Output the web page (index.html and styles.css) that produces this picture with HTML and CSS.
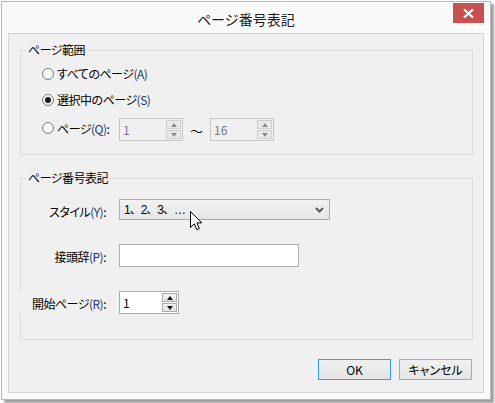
FILE: index.html
```html
<!DOCTYPE html>
<html lang="ja">
<head>
<meta charset="utf-8">
<title>ページ番号表記</title>
<link rel="stylesheet" href="styles.css">
</head>
<body>
<div class="window">
  <div class="titlebar">
    <div class="title">ページ番号表記</div>
    <div class="close">
      <svg width="11" height="9" viewBox="0 0 11 9"><path d="M1 0.5 L10 8.5 M10 0.5 L1 8.5" stroke="#fff" stroke-width="2.2" fill="none"/></svg>
    </div>
  </div>
  <div class="panel">
    <div class="group g1">
      <div class="gcap"><span>ページ範囲</span></div>
      <div class="row r1"><span class="radio"></span><span class="rlabel">すべてのページ<span class="acc">(A)</span></span></div>
      <div class="row r2"><span class="radio checked"></span><span class="rlabel">選択中のページ<span class="acc">(S)</span></span></div>
      <div class="row r3">
        <span class="radio"></span><span class="rlabel fixed">ページ<span class="acc">(Q)</span>:</span>
        <div class="spin disabled w64"><span class="val">1</span><div class="spinbtns"><span class="sb up"></span><span class="sb down"></span></div></div>
        <span class="tilde">〜</span>
        <div class="spin disabled w64"><span class="val">16</span><div class="spinbtns"><span class="sb up"></span><span class="sb down"></span></div></div>
      </div>
    </div>
    <div class="group g2">
      <div class="gcap"><span>ページ番号表記</span></div>
      <div class="frow f1">
        <span class="flabel">スタイル<span class="acc">(Y)</span>:</span>
        <div class="combo"><span class="val">1、2、3、…</span>
          <svg class="chev" width="9" height="6" viewBox="0 0 9 6"><path d="M1 1 L4.5 4.5 L8 1" stroke="#5a5a5a" stroke-width="2" fill="none"/></svg>
        </div>
      </div>
      <div class="frow f2">
        <span class="flabel">接頭辞<span class="acc">(P)</span>:</span>
        <div class="textbox"></div>
      </div>
      <div class="frow f3">
        <span class="flabel wide">開始ページ<span class="acc">(R)</span>:</span>
        <div class="spin w60"><span class="val">1</span><div class="spinbtns"><span class="sb up"></span><span class="sb down"></span></div></div>
      </div>
    </div>
    <div class="buttons">
      <div class="btn default">OK</div>
      <div class="btn">キャンセル</div>
    </div>
  </div>
</div>
<svg class="cursor" width="13" height="20" viewBox="0 0 13 20"><path d="M0.5 0.5 L0.5 16.5 L4.3 12.8 L6.8 18.7 L9.3 17.6 L6.9 11.9 L11.8 11.9 Z" fill="#fff" stroke="#000" stroke-width="1" stroke-linejoin="miter"/></svg>
</body>
</html>
```

FILE: styles.css
```css
* { box-sizing: border-box; }
html, body { margin: 0; padding: 0; background: #ffffff; }
body {
  padding: 1px 0 0 1px;
  font-family: "Noto Sans CJK JP", "Noto Sans", sans-serif;
  font-size: 12px;
  color: #000;
  font-feature-settings: "palt";
  letter-spacing: -0.5px;
  position: relative;
  width: 495px;
  height: 403px;
  overflow: hidden;
}
.window {
  width: 490px;
  height: 399px;
  background: #fafafa;
  border: 1px solid #b8b8b8;
  box-shadow: 3px 3px 2px rgba(0,0,0,0.38);
  display: flex;
  flex-direction: column;
}
.titlebar {
  height: 31px;
  display: flex;
  align-items: flex-start;
}
.title {
  flex: 1;
  padding-left: 37px;
  text-align: center;
  font-size: 14px;
  line-height: 18px;
  margin-top: 8px;
  color: #1e1e1e;
  letter-spacing: 0;
  font-feature-settings: normal;
}
.close {
  width: 31px;
  height: 20px;
  margin-top: 1px;
  margin-right: 6px;
  background: #c75050;
  display: flex;
  align-items: center;
  justify-content: center;
}
.panel {
  margin: 0 6px 6px 6px;
  height: 360px;
  background: #f0f0f0;
  border: 1px solid #d3d3d3;
  padding: 16px 10px 12px 11px;
  display: flex;
  flex-direction: column;
}
.group {
  border: 1px solid #dcdcdc;
}
.g1 { height: 105px; padding-bottom: 13px; }
.g2 { height: 162px; margin-top: 23px; padding-bottom: 25px; }
.gcap {
  height: 16px;
  margin-top: -9px;
  line-height: 16px;
  padding-left: 5px;
}
.gcap span {
  display: inline-block;
  background: #f0f0f0;
  padding: 0 2px;
}
.row {
  display: flex;
  align-items: center;
  padding-left: 21px;
  line-height: 16px;
}
.r1 { height: 16px; margin-top: 8px; }
.r2 { height: 16px; margin-top: 10px; }
.r3 { height: 23px; margin-top: 10px; }
.radio {
  width: 12px;
  height: 12px;
  border-radius: 50%;
  border: 1px solid #7e7e7e;
  background: radial-gradient(circle at 50% 40%, #ffffff 30%, #e2e2e2 100%);
  margin-right: 3px;
  display: flex;
  align-items: center;
  justify-content: center;
  flex: none;
}
.r3 .radio { margin-top: -3px; }
.radio.checked::after {
  content: "";
  width: 6px;
  height: 6px;
  border-radius: 50%;
  background: #1a1a1a;
}
.rlabel { white-space: nowrap; }
.rlabel.fixed { width: 62px; margin-top: -2px; }
.acc { color: #18386e; }
.spin {
  height: 23px;
  border: 1px solid #ababab;
  background: #ffffff;
  display: flex;
  align-items: stretch;
  padding: 1px;
  letter-spacing: 0;
}
.spin.w64 { width: 64px; }
.spin.w60 { width: 60px; }
.spin .val {
  flex: 1;
  padding-left: 2px;
  line-height: 19px;
}
.spin.disabled {
  background: #f0f0f0;
  border-color: #c6c6c6;
}
.spin.disabled .val { color: #72768a; }
.spinbtns {
  width: 15px;
  display: flex;
  flex-direction: column;
  gap: 1px;
}
.sb {
  flex: 1;
  border: 1px solid #acacac;
  background: linear-gradient(#f2f2f2, #e3e3e3);
  display: flex;
  align-items: center;
  justify-content: center;
}
.spin.disabled .sb { border-color: #cfcfcf; background: #e9e9e9; }
.sb::after {
  content: "";
  width: 0;
  height: 0;
  border-left: 3.5px solid transparent;
  border-right: 3.5px solid transparent;
}
.sb.up::after { border-bottom: 4px solid #111; }
.sb.down::after { border-top: 4px solid #111; }
.spin.disabled .sb.up::after { border-bottom-color: #8a8a8a; }
.spin.disabled .sb.down::after { border-top-color: #8a8a8a; }
.tilde {
  width: 27px;
  text-align: center;
  font-size: 13px;
  line-height: 23px;
  padding-top: 2px;
  letter-spacing: 0;
}
.frow {
  display: flex;
  align-items: center;
  gap: 13px;
}
.f1 { height: 21px; margin-top: 13px; }
.f2 { height: 23px; margin-top: 24px; }
.f3 { height: 23px; margin-top: 24px; }
.flabel {
  width: 85px;
  text-align: right;
  line-height: 16px;
  white-space: nowrap;
}
.f1 .flabel { padding-top: 4px; }
.f2 .flabel, .f3 .flabel { padding-top: 2px; }
.flabel.wide {
  width: 88px;
  margin-left: -3px;
  background: #f0f0f0;
  height: 22px;
  line-height: 20px;
}
.combo {
  width: 211px;
  height: 21px;
  border: 1px solid #acacac;
  background: linear-gradient(#f2f2f2, #e5e5e5);
  display: flex;
  align-items: center;
  justify-content: space-between;
  padding: 0 5px 0 4px;
}
.combo .val {
  line-height: 16px;
  font-family: "Liberation Sans", "Noto Sans CJK JP", sans-serif;
  font-feature-settings: normal;
  letter-spacing: -1px;
}
.chev { margin-top: 1px; }
.textbox {
  width: 180px;
  height: 23px;
  border: 1px solid #acacac;
  background: #ffffff;
}
.buttons {
  margin-top: 19px;
  display: flex;
  justify-content: flex-end;
  gap: 8px;
  padding-right: 1px;
}
.btn {
  width: 73px;
  height: 21px;
  border: 1px solid #acacac;
  background: linear-gradient(#f0f0f0, #e5e5e5);
  text-align: center;
  line-height: 19px;
  letter-spacing: 0;
}
.btn.default { border-color: #3399ff; }
.cursor {
  position: absolute;
  left: 190px;
  top: 211px;
}
```
